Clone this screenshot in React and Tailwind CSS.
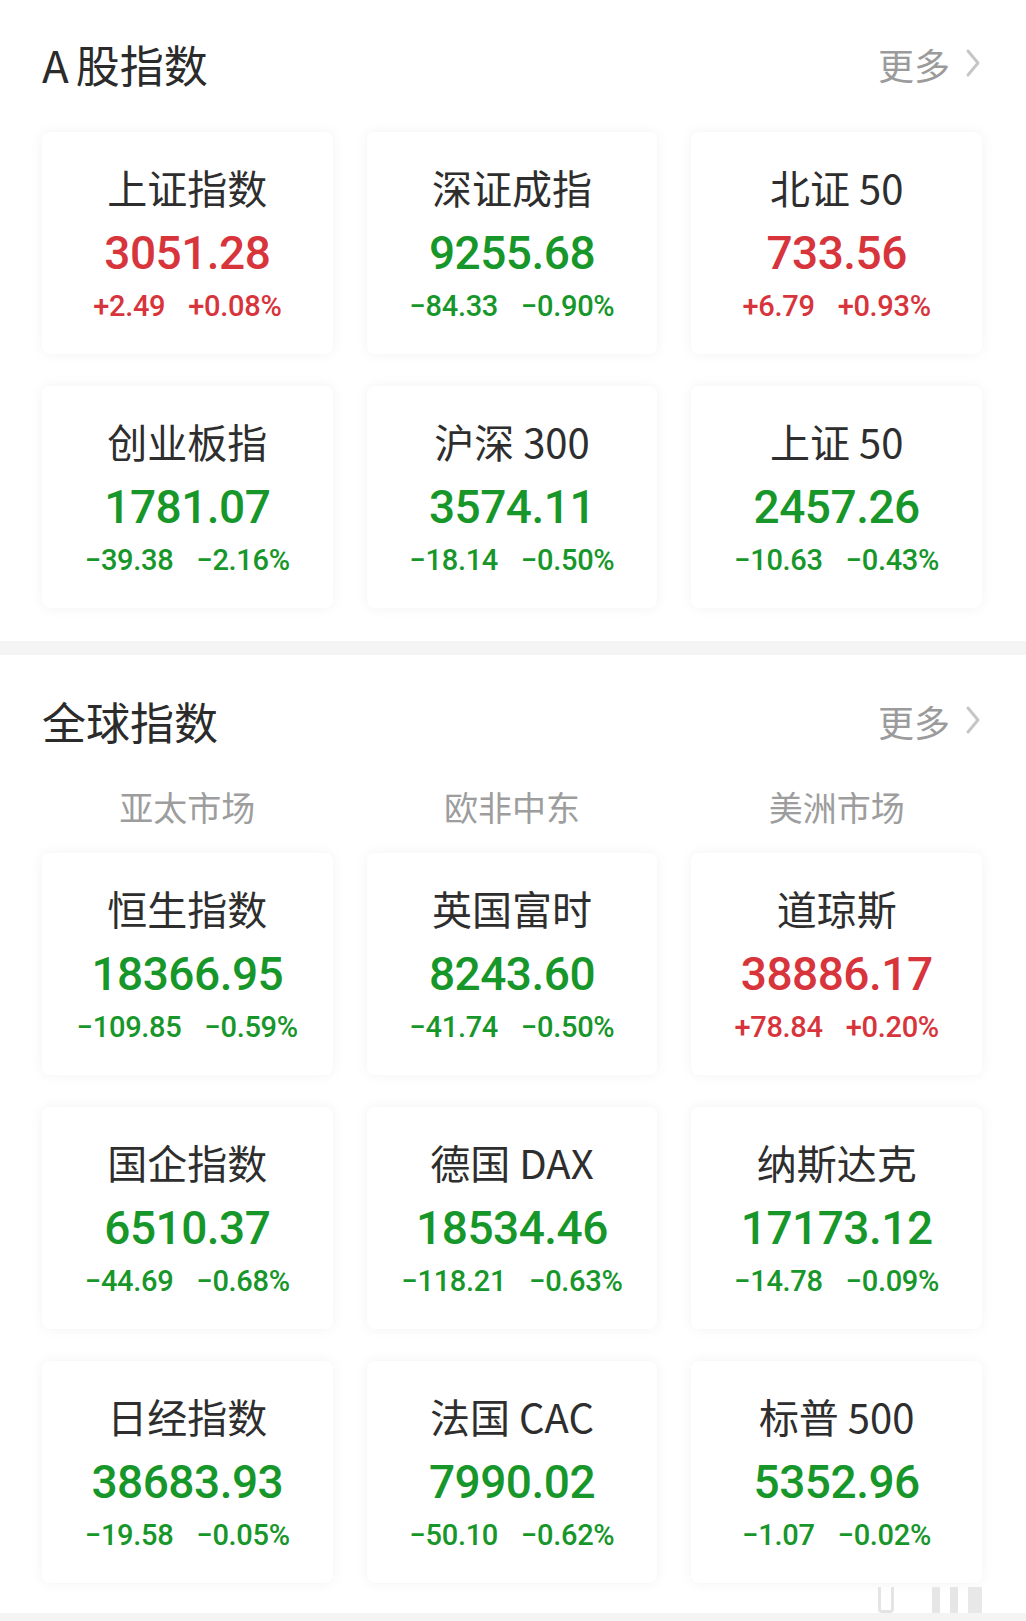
const aShares = [
  { name: '上证指数', value: '3051.28', change: '+2.49', pct: '+0.08%', up: true },
  { name: '深证成指', value: '9255.68', change: '−84.33', pct: '−0.90%', up: false },
  { name: '北证 50', value: '733.56', change: '+6.79', pct: '+0.93%', up: true },
  { name: '创业板指', value: '1781.07', change: '−39.38', pct: '−2.16%', up: false },
  { name: '沪深 300', value: '3574.11', change: '−18.14', pct: '−0.50%', up: false },
  { name: '上证 50', value: '2457.26', change: '−10.63', pct: '−0.43%', up: false },
];

const globalIdx = [
  { name: '恒生指数', value: '18366.95', change: '−109.85', pct: '−0.59%', up: false },
  { name: '英国富时', value: '8243.60', change: '−41.74', pct: '−0.50%', up: false },
  { name: '道琼斯', value: '38886.17', change: '+78.84', pct: '+0.20%', up: true },
  { name: '国企指数', value: '6510.37', change: '−44.69', pct: '−0.68%', up: false },
  { name: '德国 DAX', value: '18534.46', change: '−118.21', pct: '−0.63%', up: false },
  { name: '纳斯达克', value: '17173.12', change: '−14.78', pct: '−0.09%', up: false },
  { name: '日经指数', value: '38683.93', change: '−19.58', pct: '−0.05%', up: false },
  { name: '法国 CAC', value: '7990.02', change: '−50.10', pct: '−0.62%', up: false },
  { name: '标普 500', value: '5352.96', change: '−1.07', pct: '−0.02%', up: false },
];

const cjk = "font-['Noto_Sans_CJK_SC','Noto_Sans',sans-serif]";
const num = "font-['Roboto','Liberation_Sans',sans-serif]";

function Header({ title, lead }) {
  return (
    <div className="flex h-[60px] items-center justify-between">
      <h2 className={`${cjk} text-[44px] leading-[60px] text-[#2b2b2b]`}>
        {lead && <span className="mr-[7px]">{lead}</span>}
        {title}
      </h2>
      <div className="flex items-center gap-[14px]">
        <span className={`${cjk} text-[36px] leading-[60px] text-[#9b9b9b]`}>更多</span>
        <svg width="18" height="30" viewBox="0 0 18 30" className="mt-[-2px]">
          <path d="M4 3 L14 15 L4 27" fill="none" stroke="#c6c6c6" strokeWidth="3" strokeLinecap="round" strokeLinejoin="round" />
        </svg>
      </div>
    </div>
  );
}

function Card({ item }) {
  const color = item.up ? 'text-[#d7343c]' : 'text-[#17962a]';
  return (
    <div className="flex h-[222px] flex-col items-center rounded-[8px] bg-white pt-[30px] shadow-[0_0_14px_rgba(0,0,0,0.055)]">
      <div className={`${cjk} h-[50px] text-[40px] leading-[50px] text-[#2e2e2e]`}>{item.name}</div>
      <div className={`${num} ${color} mt-[13px] h-[56px] text-[46px] font-medium leading-[56px] tracking-[-0.5px]`}>
        {item.value}
      </div>
      <div className={`${num} ${color} mt-[7px] flex h-[36px] gap-[23px] text-[29px] font-medium leading-[36px] tracking-[-0.3px]`}>
        <span>{item.change}</span>
        <span>{item.pct}</span>
      </div>
    </div>
  );
}

export default function App() {
  return (
    <div className="min-h-[1621px] w-[1026px] bg-white">
      <section className="pl-[42px] pr-[44px] pt-[34px] pb-[33px]">
        <Header lead="A" title="股指数" />
        <div className="mt-[38px] grid grid-cols-3 gap-x-[34px] gap-y-[32px]">
          {aShares.map((it) => (
            <Card key={it.name} item={it} />
          ))}
        </div>
      </section>

      <div className="h-[14px] bg-[#f4f4f4]" />

      <section className="pl-[42px] pr-[44px] pt-[36px]">
        <Header title="全球指数" />
        <div className="mt-[34px] grid grid-cols-3 gap-x-[34px]">
          {['亚太市场', '欧非中东', '美洲市场'].map((t) => (
            <div key={t} className={`${cjk} text-center text-[34px] leading-[44px] text-[#9d9d9d]`}>
              {t}
            </div>
          ))}
        </div>
        <div className="mt-[24px] grid grid-cols-3 gap-x-[34px] gap-y-[32px]">
          {globalIdx.map((it) => (
            <Card key={it.name} item={it} />
          ))}
        </div>
        <div className="flex h-[30px] items-end justify-end gap-[10px]">
          <div className="h-[26px] w-[16px] rounded-b-[4px] border-x-[3px] border-b-[3px] border-[#e4e4e4]" />
          <div className="ml-[28px] h-[26px] w-[8px] bg-[#e6e6e6]" />
          <div className="h-[26px] w-[8px] bg-[#e6e6e6]" />
          <div className="h-[26px] w-[14px] bg-[#e8e8e8]" />
        </div>
      </section>

      <div className="h-[20px] bg-[#f4f4f4]" />
    </div>
  );
}
